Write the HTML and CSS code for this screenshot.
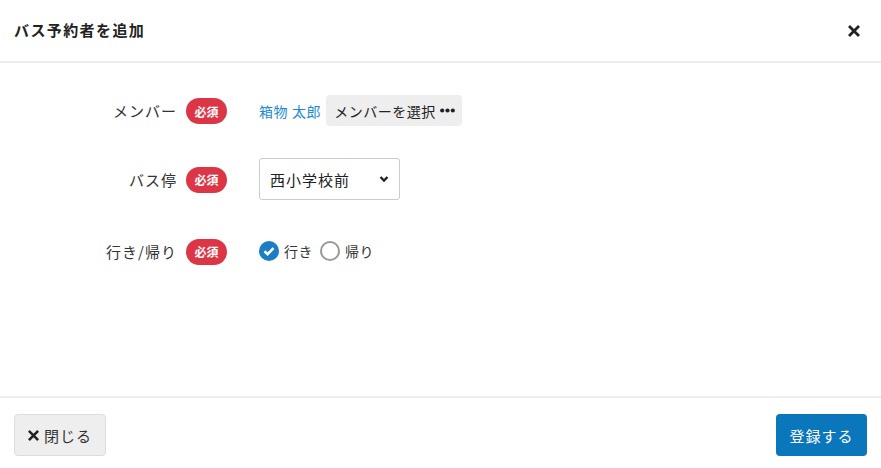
FILE: index.html
```html
<!DOCTYPE html>
<html lang="ja">
<head>
<meta charset="utf-8">
<link rel="stylesheet" href="styles.css">
</head>
<body>
<div class="modal">
  <header class="modal-header">
    <h1 class="title">バス予約者を追加</h1>
    <button class="close-x" aria-label="閉じる">
      <svg width="12" height="12" viewBox="0 0 12 12"><path d="M2 2 L10 10 M10 2 L2 10" stroke="#222" stroke-width="2.8" stroke-linecap="square"/></svg>
    </button>
  </header>
  <main class="modal-body">
    <div class="row row-member">
      <div class="label-cell"><span class="label">メンバー</span><span class="badge">必須</span></div>
      <div class="field">
        <span class="member-name">箱物 太郎</span>
        <button class="select-btn">メンバーを選択<svg class="dots" width="15" height="5" viewBox="0 0 15 5"><circle cx="2.2" cy="2.5" r="2.1" fill="#222"/><circle cx="7.5" cy="2.5" r="2.1" fill="#222"/><circle cx="12.8" cy="2.5" r="2.1" fill="#222"/></svg></button>
      </div>
    </div>
    <div class="row row-stop">
      <div class="label-cell"><span class="label">バス停</span><span class="badge">必須</span></div>
      <div class="field">
        <div class="select">
          <span>西小学校前</span>
          <svg width="10" height="8" viewBox="0 0 10 8"><path d="M1.5 2 L5 5.5 L8.5 2" fill="none" stroke="#222" stroke-width="2.4"/></svg>
        </div>
      </div>
    </div>
    <div class="row row-dir">
      <div class="label-cell"><span class="label">行き/帰り</span><span class="badge">必須</span></div>
      <div class="field radios">
        <span class="radio checked"><svg width="20" height="20" viewBox="0 0 20 20"><circle cx="10" cy="10" r="10" fill="#1a7dc6"/><path d="M5.5 10.2 L8.6 13.2 L14.5 7.2" fill="none" stroke="#fff" stroke-width="2.6"/></svg></span>
        <span class="radio-label">行き</span>
        <span class="radio"><svg width="20" height="20" viewBox="0 0 20 20"><circle cx="10" cy="10" r="9" fill="#fff" stroke="#999" stroke-width="2"/></svg></span>
        <span class="radio-label">帰り</span>
      </div>
    </div>
  </main>
  <footer class="modal-footer">
    <button class="btn btn-close"><svg width="11" height="11" viewBox="0 0 12 12"><path d="M2 2 L10 10 M10 2 L2 10" stroke="#222" stroke-width="2.8" stroke-linecap="square"/></svg>閉じる</button>
    <button class="btn btn-primary">登録する</button>
  </footer>
</div>
</body>
</html>
```
FILE: styles.css
```css
* { box-sizing: border-box; }
html, body { margin: 0; padding: 0; }
body {
  font-family: "Noto Sans CJK JP", "Noto Sans", sans-serif;
  color: #333;
  background: #fff;
  font-size: 14px;
}
.modal {
  width: 881px;
  height: 468px;
  display: flex;
  flex-direction: column;
}
.modal-header {
  height: 63px;
  border-bottom: 2px solid #eeeeee;
  display: flex;
  align-items: center;
  justify-content: space-between;
  padding: 0 20px 3px 14px;
}
.title {
  margin: 0;
  font-size: 15px;
  font-weight: bold;
  color: #222;
  letter-spacing: 1.4px;
}
.close-x {
  border: 0;
  background: none;
  padding: 0;
  width: 14px;
  height: 14px;
  display: flex;
  align-items: center;
  justify-content: center;
  margin-top: 3px;
}
.modal-body {
  flex: 1;
  padding-top: 32px;
  display: flex;
  flex-direction: column;
  gap: 32px;
}
.row {
  display: flex;
  align-items: center;
}
.row-member { height: 31px; }
.row-stop { height: 42px; }
.row-dir { height: 40px; margin-top: -1px; }
.label-cell {
  width: 227px;
  display: flex;
  justify-content: flex-end;
  align-items: center;
  gap: 10px;
}
.label {
  font-size: 15px;
  color: #333;
  letter-spacing: 1px;
  margin-right: -1px;
}
.badge {
  width: 41px;
  height: 26px;
  border-radius: 13px;
  background: #dc3545;
  color: #fff;
  font-size: 12px;
  font-weight: bold;
  display: inline-flex;
  align-items: center;
  justify-content: center;
  margin-top: 1px;
}
.field {
  margin-left: 32px;
  display: flex;
  align-items: center;
}
.member-name {
  color: #1b8bd2;
  font-size: 14px;
  letter-spacing: 0.6px;
  margin-right: 5px;
}
.select-btn {
  height: 31px;
  width: 136px;
  border: 0;
  border-radius: 4px;
  background: #eeeeee;
  color: #222;
  font-family: inherit;
  font-size: 14px;
  letter-spacing: 0.5px;
  padding: 0 0 0 8px;
  display: flex;
  align-items: center;
  gap: 4px;
}
.dots { flex: none; }
.select {
  width: 141px;
  height: 42px;
  border: 1px solid #cccccc;
  border-radius: 3px;
  display: flex;
  align-items: center;
  justify-content: space-between;
  padding: 0 10px 0 10px;
  font-size: 15px;
  letter-spacing: 1px;
  color: #222;
}
.radios { gap: 0; }
.radio { display: inline-flex; width: 20px; height: 20px; }
.radio-label {
  font-size: 14px;
  color: #333;
  letter-spacing: 0.5px;
  margin-left: 5px;
  margin-right: 7px;
}
.modal-footer {
  border-top: 2px solid #eeeeee;
  padding: 16px 14px 12px 14px;
  display: flex;
  justify-content: space-between;
  height: 72px;
}
.btn {
  height: 42px;
  border-radius: 4px;
  font-family: inherit;
  font-size: 15px;
  letter-spacing: 1px;
  display: inline-flex;
  align-items: center;
  justify-content: center;
}
.btn-close {
  width: 92px;
  background: #eeeeee;
  border: 1px solid #dddddd;
  color: #333;
  gap: 5px;
}
.btn-primary {
  width: 91px;
  background: #0a76bc;
  border: 0;
  color: #fff;
}
```
